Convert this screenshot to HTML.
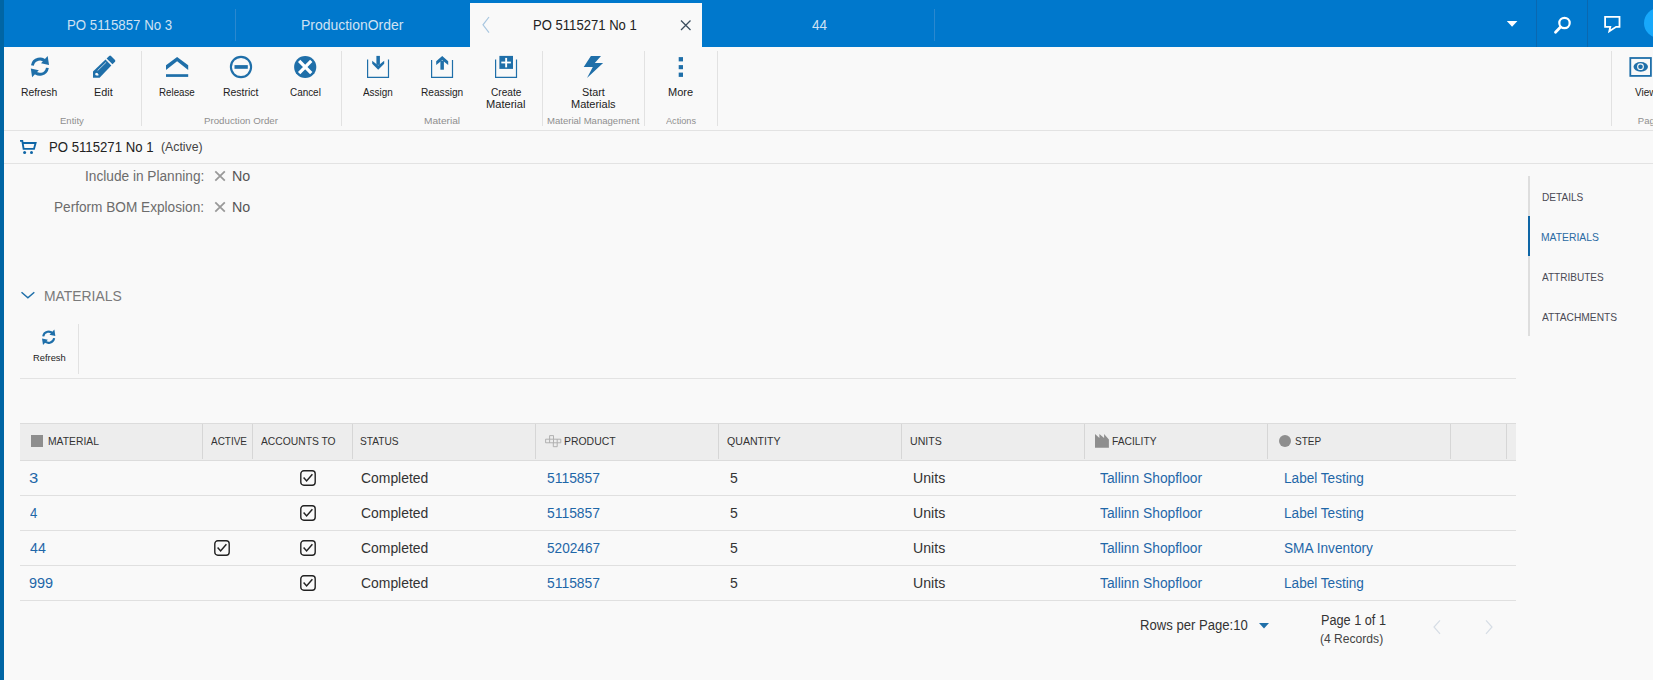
<!DOCTYPE html>
<html><head><meta charset="utf-8"><title>Production Order</title>
<style>
html,body{margin:0;padding:0;}
body{width:1653px;height:680px;overflow:hidden;background:#f9f9f9;position:relative;font-family:"Liberation Sans", sans-serif;}
.t{position:absolute;white-space:nowrap;}
.r{position:absolute;}
.s{position:absolute;overflow:visible;}
</style></head><body>
<div class="r" style="left:0px;top:0px;width:1653px;height:47px;background:#0078cc;"></div>
<div class="r" style="left:0px;top:0px;width:4px;height:680px;background:#0065a4;"></div>
<div class="t" style="left:67.25px;top:15px;font-size:14px;line-height:20px;color:#cfe2f3;transform:scaleX(0.9473);transform-origin:0 0;">PO 5115857 No 3</div>
<div class="r" style="left:235px;top:9px;width:1px;height:32px;background:#2a88cf;"></div>
<div class="t" style="left:301.20px;top:15px;font-size:14px;line-height:20px;color:#cfe2f3;transform:scaleX(0.9961);transform-origin:0 0;">ProductionOrder</div>
<div class="r" style="left:470px;top:3px;width:232px;height:44px;background:#f9f9f9;"></div>
<svg class="s" style="left:480px;top:15px;" width="12" height="20" viewBox="0 0 12 20"><path d="M9,2 L3,9.8 L9,17.6" fill="none" stroke="#a9c7e0" stroke-width="1.2"/></svg>
<div class="t" style="left:533.47px;top:15px;font-size:14px;line-height:20px;color:#222;transform:scaleX(0.9345);transform-origin:0 0;">PO 5115271 No 1</div>
<svg class="s" style="left:678px;top:18px;" width="15" height="15" viewBox="0 0 15 15"><path d="M3,2.5 L12.5,12 M12.5,2.5 L3,12" fill="none" stroke="#3d4f60" stroke-width="1.3"/></svg>
<div class="t" style="left:811.80px;top:15px;font-size:14px;line-height:20px;color:#cfe2f3;transform:scaleX(0.9667);transform-origin:0 0;">44</div>
<div class="r" style="left:934px;top:9px;width:1px;height:32px;background:#2a88cf;"></div>
<svg class="s" style="left:1505px;top:19px;" width="14" height="10" viewBox="0 0 14 10"><path d="M1.8,2 H12.4 L7.1,7.7 Z" fill="#ffffff"/></svg>
<div class="r" style="left:1536px;top:0px;width:1px;height:47px;background:#0a68b0;"></div>
<div class="r" style="left:1587px;top:0px;width:1px;height:47px;background:#0a68b0;"></div>
<svg class="s" style="left:1550px;top:14px;" width="26" height="22" viewBox="0 0 26 22"><circle cx="14.5" cy="9" r="5.2" fill="none" stroke="#fff" stroke-width="2.2"/><path d="M10.6,13 L5.5,18.2" stroke="#fff" stroke-width="2.8" stroke-linecap="round"/></svg>
<svg class="s" style="left:1600px;top:13px;" width="24" height="22" viewBox="0 0 24 22"><path d="M5.1,3.9 H19.5 V13.8 H16.1 L9.3,18.3 L10.3,13.8 H5.1 Z" fill="none" stroke="#fff" stroke-width="1.8" stroke-linejoin="miter"/></svg>
<div class="r" style="left:1644px;top:8px;width:30px;height:30px;border-radius:50%;background:#17a8fb"></div>
<div class="r" style="left:4px;top:130px;width:1649px;height:1px;background:#e3e3e3;"></div>
<div class="r" style="left:141px;top:51px;width:1px;height:75px;background:#e2e2e2;"></div>
<div class="r" style="left:341px;top:51px;width:1px;height:75px;background:#e2e2e2;"></div>
<div class="r" style="left:542px;top:51px;width:1px;height:75px;background:#e2e2e2;"></div>
<div class="r" style="left:644px;top:51px;width:1px;height:75px;background:#e2e2e2;"></div>
<div class="r" style="left:717px;top:51px;width:1px;height:75px;background:#e2e2e2;"></div>
<div class="r" style="left:1611px;top:51px;width:1px;height:75px;background:#e2e2e2;"></div>
<svg class="s" style="left:28px;top:54px;" width="26" height="27" viewBox="0 0 26 27"><g transform="scale(1.0)"><path d="M4.39,11.47 A7.6,7.6 0 0 1 18.12,8.3" fill="none" stroke="#1f6fa9" stroke-width="2.86"/><path d="M19.69,2.1 L21.02,10.9 L13,9.17 Z" fill="#1f6fa9"/><path d="M19.41,13.85 A7.6,7.6 0 0 1 5.68,17.02" fill="none" stroke="#1f6fa9" stroke-width="2.86"/><path d="M4.11,23.22 L2.78,14.42 L10.8,16.15 Z" fill="#1f6fa9"/></g></svg>
<div class="t" style="left:21.36px;top:83px;font-size:10px;line-height:20px;color:#222;transform:scaleX(1.0353);transform-origin:0 0;">Refresh</div>
<svg class="s" style="left:90px;top:53px;" width="28" height="28" viewBox="0 0 28 28"><path d="M3,18.5 L15.5,6.6 L21.3,12.6 L9.6,24.7 L3,24.7 Z" fill="#1f6fa9"/><path d="M16.6,5.4 L19.2,2.9 Q20.1,2.1 21,2.9 L25,6.9 Q25.8,7.8 25,8.7 L22.5,11.3 Z" fill="#1f6fa9"/><path d="M7.6,17.6 L16.2,9.2" stroke="#f9f9f9" stroke-width="0.9" opacity="0.8"/><circle cx="6.7" cy="21.2" r="1.3" fill="#f9f9f9"/><path d="M5.8,20.2 L8.4,22.2" stroke="#f9f9f9" stroke-width="1.4"/></svg>
<div class="t" style="left:94.22px;top:83px;font-size:10px;line-height:20px;color:#222;transform:scaleX(1.0812);transform-origin:0 0;">Edit</div>
<div class="t" style="left:59.70px;top:111px;font-size:9.5px;line-height:20px;color:#8f8f8f;transform:scaleX(1.0043);transform-origin:0 0;">Entity</div>
<svg class="s" style="left:163px;top:53px;" width="28" height="28" viewBox="0 0 28 28"><path d="M3,12.3 L14.1,3.9 L25.2,12.3 L25.2,16.9 L14.1,8.2 L3,16.9 Z" fill="#1f6fa9"/><rect x="3" y="21.2" width="22.2" height="2.7" fill="#1f6fa9"/></svg>
<div class="t" style="left:158.53px;top:83px;font-size:10px;line-height:20px;color:#222;transform:scaleX(0.9750);transform-origin:0 0;">Release</div>
<svg class="s" style="left:228px;top:54px;" width="26" height="26" viewBox="0 0 26 26"><circle cx="13" cy="13" r="10.1" fill="none" stroke="#1f6fa9" stroke-width="2.1"/><rect x="6.5" y="11.1" width="13.3" height="3.7" fill="#1f6fa9"/></svg>
<div class="t" style="left:222.75px;top:83px;font-size:10px;line-height:20px;color:#222;transform:scaleX(1.0455);transform-origin:0 0;">Restrict</div>
<svg class="s" style="left:292px;top:54px;" width="26" height="26" viewBox="0 0 26 26"><circle cx="13.2" cy="13" r="11.1" fill="#1f6fa9"/><path d="M7.15,6.95 L19.25,19.05 M19.25,6.95 L7.15,19.05" stroke="#fff" stroke-width="3.3"/></svg>
<div class="t" style="left:289.70px;top:83px;font-size:10px;line-height:20px;color:#222;transform:scaleX(0.9903);transform-origin:0 0;">Cancel</div>
<div class="t" style="left:203.78px;top:111px;font-size:9.5px;line-height:20px;color:#8f8f8f;transform:scaleX(1.0225);transform-origin:0 0;">Production Order</div>
<svg class="s" style="left:364px;top:53px;" width="28" height="28" viewBox="0 0 28 28"><path d="M3.6,6.4 V24.3 H24.5 V6.4" fill="none" stroke="#1f6fa9" stroke-width="1.2"/><rect x="12.4" y="2.9" width="3.5" height="9" fill="#1f6fa9"/><path d="M8.2,7.8 L14.2,12.6 L20.2,7.8 L20.2,10.8 L14.2,16.7 L8.2,10.8 Z" fill="#1f6fa9"/></svg>
<div class="t" style="left:363.20px;top:83px;font-size:10px;line-height:20px;color:#222;transform:scaleX(0.9900);transform-origin:0 0;">Assign</div>
<svg class="s" style="left:428px;top:53px;" width="28" height="28" viewBox="0 0 28 28"><path d="M3.6,7 V24.3 H24.5 V7" fill="none" stroke="#1f6fa9" stroke-width="1.2"/><rect x="12.4" y="8" width="3.5" height="8.7" fill="#1f6fa9"/><path d="M8.2,8.2 L14.2,2.9 L20.2,8.2 L20.2,11.9 L14.2,7.2 L8.2,11.9 Z" fill="#1f6fa9"/></svg>
<div class="t" style="left:420.79px;top:83px;font-size:10px;line-height:20px;color:#222;transform:scaleX(1.0125);transform-origin:0 0;">Reassign</div>
<svg class="s" style="left:492px;top:53px;" width="28" height="28" viewBox="0 0 28 28"><path d="M3.6,6.4 V24.3 H24.5 V6.4" fill="none" stroke="#1f6fa9" stroke-width="1.2"/><rect x="7.4" y="2.9" width="13.6" height="13" fill="#1f6fa9"/><rect x="9.3" y="8.6" width="9.6" height="1.8" fill="#fff"/><rect x="13.2" y="4.9" width="1.9" height="9.5" fill="#fff"/></svg>
<div class="t" style="left:491.00px;top:83px;font-size:10px;line-height:20px;color:#222;transform:scaleX(1.0100);transform-origin:0 0;">Create</div>
<div class="t" style="left:486.49px;top:95px;font-size:10px;line-height:20px;color:#222;transform:scaleX(1.1088);transform-origin:0 0;">Material</div>
<div class="t" style="left:423.93px;top:111px;font-size:9.5px;line-height:20px;color:#8f8f8f;transform:scaleX(1.0687);transform-origin:0 0;">Material</div>
<svg class="s" style="left:580px;top:53px;" width="28" height="28" viewBox="0 0 28 28"><path d="M10.9,2.9 L21,2.9 L14.8,10.1 L23.1,10.1 L7,24.9 L12.8,14 L3.7,14 Z" fill="#1f6fa9"/></svg>
<div class="t" style="left:581.52px;top:83px;font-size:10px;line-height:20px;color:#222;transform:scaleX(1.0800);transform-origin:0 0;">Start</div>
<div class="t" style="left:571.00px;top:95px;font-size:10px;line-height:20px;color:#222;transform:scaleX(1.1000);transform-origin:0 0;">Materials</div>
<div class="t" style="left:546.59px;top:111px;font-size:9.5px;line-height:20px;color:#8f8f8f;transform:scaleX(1.0055);transform-origin:0 0;">Material Management</div>
<svg class="s" style="left:676px;top:55px;" width="10" height="24" viewBox="0 0 10 24"><rect x="2.7" y="2.1" width="4.3" height="4.3" fill="#1f6fa9"/><rect x="2.7" y="10.1" width="4.3" height="4.1" fill="#1f6fa9"/><rect x="2.7" y="17.6" width="4.3" height="4.3" fill="#1f6fa9"/></svg>
<div class="t" style="left:667.60px;top:83px;font-size:10px;line-height:20px;color:#222;transform:scaleX(1.1000);transform-origin:0 0;">More</div>
<div class="t" style="left:665.70px;top:111px;font-size:9.5px;line-height:20px;color:#8f8f8f;transform:scaleX(0.9645);transform-origin:0 0;">Actions</div>
<svg class="s" style="left:1625px;top:50px;" width="28" height="30" viewBox="0 0 28 30"><rect x="5.3" y="8" width="20.6" height="17.9" fill="none" stroke="#1f6fa9" stroke-width="1.8"/><ellipse cx="15.75" cy="16.85" rx="7.25" ry="4.85" fill="#1f6fa9"/><circle cx="15.5" cy="16.7" r="3.4" fill="#f9f9f9"/><circle cx="15.5" cy="16.7" r="2.3" fill="#1f6fa9"/></svg>
<div class="t" style="left:1635.10px;top:83px;font-size:10px;line-height:20px;color:#222;">View</div>
<div class="t" style="left:1637.80px;top:111px;font-size:9.5px;line-height:20px;color:#8f8f8f;">Page</div>
<div class="r" style="left:4px;top:163px;width:1649px;height:1px;background:#e3e3e3;"></div>
<svg class="s" style="left:16px;top:136px;" width="24" height="22" viewBox="0 0 24 22"><path d="M4,4.9 H6.3 L7.6,12.9 H18 L19.6,7 H6.6" fill="none" stroke="#0f66a6" stroke-width="1.9" stroke-linejoin="miter"/><circle cx="8.6" cy="16.5" r="1.5" fill="#0f66a6"/><circle cx="15.5" cy="16.5" r="1.5" fill="#0f66a6"/></svg>
<div class="t" style="left:49.36px;top:137px;font-size:14px;line-height:20px;color:#222;transform:scaleX(0.9409);transform-origin:0 0;">PO 5115271 No 1</div>
<div class="t" style="left:160.76px;top:137px;font-size:13px;line-height:20px;color:#444;transform:scaleX(0.9429);transform-origin:0 0;">(Active)</div>
<div class="t" style="left:85.22px;top:166px;font-size:14px;line-height:20px;color:#6c6c6c;transform:scaleX(0.9767);transform-origin:0 0;">Include in Planning:</div>
<div class="t" style="left:54.43px;top:197px;font-size:14px;line-height:20px;color:#6c6c6c;transform:scaleX(0.9737);transform-origin:0 0;">Perform BOM Explosion:</div>
<svg class="s" style="left:213px;top:169.2px;" width="14" height="14" viewBox="0 0 14 14"><path d="M2.3,2.3 L11.8,11.6 M11.8,2.3 L2.3,11.6" stroke="#999" stroke-width="1.8"/></svg>
<svg class="s" style="left:213px;top:200.0px;" width="14" height="14" viewBox="0 0 14 14"><path d="M2.3,2.3 L11.8,11.6 M11.8,2.3 L2.3,11.6" stroke="#999" stroke-width="1.8"/></svg>
<div class="t" style="left:231.88px;top:166px;font-size:14px;line-height:20px;color:#555;transform:scaleX(1.0187);transform-origin:0 0;">No</div>
<div class="t" style="left:231.88px;top:197px;font-size:14px;line-height:20px;color:#555;transform:scaleX(1.0187);transform-origin:0 0;">No</div>
<svg class="s" style="left:19px;top:288px;" width="18" height="12" viewBox="0 0 18 12"><path d="M2.5,4.2 L8.9,9.8 L15.3,4.2" fill="none" stroke="#1f6fa9" stroke-width="1.5"/></svg>
<div class="t" style="left:43.87px;top:286px;font-size:15px;line-height:20px;color:#7a7a7a;transform:scaleX(0.9265);transform-origin:0 0;">MATERIALS</div>
<svg class="s" style="left:40.07px;top:327.57px;" width="19" height="20" viewBox="0 0 19 20"><g transform="scale(0.73)"><path d="M4.39,11.47 A7.6,7.6 0 0 1 18.12,8.3" fill="none" stroke="#1f6fa9" stroke-width="2.86"/><path d="M19.69,2.1 L21.02,10.9 L13,9.17 Z" fill="#1f6fa9"/><path d="M19.41,13.85 A7.6,7.6 0 0 1 5.68,17.02" fill="none" stroke="#1f6fa9" stroke-width="2.86"/><path d="M4.11,23.22 L2.78,14.42 L10.8,16.15 Z" fill="#1f6fa9"/></g></svg>
<div class="t" style="left:32.52px;top:348px;font-size:9.5px;line-height:20px;color:#222;transform:scaleX(0.9844);transform-origin:0 0;">Refresh</div>
<div class="r" style="left:78px;top:324px;width:1px;height:50px;background:#e2e2e2;"></div>
<div class="r" style="left:20px;top:378px;width:1496px;height:1px;background:#e3e3e3;"></div>
<div class="r" style="left:20px;top:423px;width:1496px;height:1px;background:#dcdcdc;"></div>
<div class="r" style="left:20px;top:424px;width:1496px;height:36px;background:#ededed;"></div>
<div class="r" style="left:20px;top:460px;width:1496px;height:1px;background:#dcdcdc;"></div>
<div class="r" style="left:202px;top:424px;width:1px;height:35px;background:#d6d6d6;"></div>
<div class="r" style="left:252px;top:424px;width:1px;height:35px;background:#d6d6d6;"></div>
<div class="r" style="left:352px;top:424px;width:1px;height:35px;background:#d6d6d6;"></div>
<div class="r" style="left:535px;top:424px;width:1px;height:35px;background:#d6d6d6;"></div>
<div class="r" style="left:718px;top:424px;width:1px;height:35px;background:#d6d6d6;"></div>
<div class="r" style="left:901px;top:424px;width:1px;height:35px;background:#d6d6d6;"></div>
<div class="r" style="left:1084px;top:424px;width:1px;height:35px;background:#d6d6d6;"></div>
<div class="r" style="left:1267px;top:424px;width:1px;height:35px;background:#d6d6d6;"></div>
<div class="r" style="left:1450px;top:424px;width:1px;height:35px;background:#d6d6d6;"></div>
<div class="r" style="left:1506px;top:424px;width:1px;height:35px;background:#d6d6d6;"></div>
<div class="r" style="left:31px;top:435px;width:12px;height:12px;background:#8e8e8e;"></div>
<div class="t" style="left:47.86px;top:431px;font-size:11px;line-height:20px;color:#333;transform:scaleX(0.9396);transform-origin:0 0;">MATERIAL</div>
<div class="t" style="left:211.00px;top:431px;font-size:11px;line-height:20px;color:#333;transform:scaleX(0.9051);transform-origin:0 0;">ACTIVE</div>
<div class="t" style="left:261.10px;top:431px;font-size:11px;line-height:20px;color:#333;transform:scaleX(0.9367);transform-origin:0 0;">ACCOUNTS TO</div>
<div class="t" style="left:360.12px;top:431px;font-size:11px;line-height:20px;color:#333;transform:scaleX(0.9256);transform-origin:0 0;">STATUS</div>
<svg class="s" style="left:544px;top:434px;" width="18" height="14" viewBox="0 0 18 14"><path d="M5.6,1.6 H9.5 V5.2 H16.8 V8.8 H13.2 V12.7 H9.3 V8.8 H1.6 V5.2 H5.6 Z M5.6,5.2 V8.8 M9.5,5.2 V8.8 M13.2,5.2 V8.8 M9.3,8.8 H13.2 M5.6,5.2 H9.5" fill="none" stroke="#aaa" stroke-width="0.9"/></svg>
<div class="t" style="left:563.75px;top:431px;font-size:11px;line-height:20px;color:#333;transform:scaleX(0.9491);transform-origin:0 0;">PRODUCT</div>
<div class="t" style="left:727.30px;top:431px;font-size:11px;line-height:20px;color:#333;transform:scaleX(0.9636);transform-origin:0 0;">QUANTITY</div>
<div class="t" style="left:909.64px;top:431px;font-size:11px;line-height:20px;color:#333;transform:scaleX(0.9625);transform-origin:0 0;">UNITS</div>
<svg class="s" style="left:1094px;top:433px;" width="16" height="16" viewBox="0 0 16 16"><path d="M1,1.1 L5.4,5.1 V1.1 L10.1,5.1 V1.1 L14.9,6.5 V14.7 H1 Z" fill="#8e8e8e"/></svg>
<div class="t" style="left:1112.27px;top:431px;font-size:11px;line-height:20px;color:#333;transform:scaleX(0.9348);transform-origin:0 0;">FACILITY</div>
<div class="r" style="left:1279px;top:435.2px;width:12px;height:12px;border-radius:50%;background:#8e8e8e"></div>
<div class="t" style="left:1295.49px;top:431px;font-size:11px;line-height:20px;color:#333;transform:scaleX(0.9111);transform-origin:0 0;">STEP</div>
<div class="r" style="left:20px;top:495px;width:1496px;height:1px;background:#e0e0e0;"></div>
<div class="t" style="left:28.92px;top:468px;font-size:14px;line-height:20px;color:#1f67a8;transform:scaleX(1.1833);transform-origin:0 0;">3</div>
<svg class="s" style="left:300px;top:470px;" width="17" height="17" viewBox="0 0 17 17"><rect x="0.8" y="0.8" width="14.4" height="14.4" rx="3" fill="none" stroke="#222" stroke-width="1.4"/><path d="M3.6,7.6 L6.6,10.9 L12.4,4.2" fill="none" stroke="#222" stroke-width="1.5"/></svg>
<div class="t" style="left:361.31px;top:468px;font-size:14px;line-height:20px;color:#333;transform:scaleX(0.9939);transform-origin:0 0;">Completed</div>
<div class="t" style="left:547.21px;top:468px;font-size:14px;line-height:20px;color:#1f67a8;transform:scaleX(0.9923);transform-origin:0 0;">5115857</div>
<div class="t" style="left:729.90px;top:468px;font-size:14px;line-height:20px;color:#333;">5</div>
<div class="t" style="left:912.99px;top:468px;font-size:14px;line-height:20px;color:#333;transform:scaleX(1.0097);transform-origin:0 0;">Units</div>
<div class="t" style="left:1100.10px;top:468px;font-size:14px;line-height:20px;color:#1f67a8;transform:scaleX(0.9864);transform-origin:0 0;">Tallinn Shopfloor</div>
<div class="t" style="left:1284.13px;top:468px;font-size:14px;line-height:20px;color:#1f67a8;transform:scaleX(0.9716);transform-origin:0 0;">Label Testing</div>
<div class="r" style="left:20px;top:530px;width:1496px;height:1px;background:#e0e0e0;"></div>
<div class="t" style="left:29.80px;top:503px;font-size:14px;line-height:20px;color:#1f67a8;transform:scaleX(0.9375);transform-origin:0 0;">4</div>
<svg class="s" style="left:300px;top:505px;" width="17" height="17" viewBox="0 0 17 17"><rect x="0.8" y="0.8" width="14.4" height="14.4" rx="3" fill="none" stroke="#222" stroke-width="1.4"/><path d="M3.6,7.6 L6.6,10.9 L12.4,4.2" fill="none" stroke="#222" stroke-width="1.5"/></svg>
<div class="t" style="left:361.31px;top:503px;font-size:14px;line-height:20px;color:#333;transform:scaleX(0.9939);transform-origin:0 0;">Completed</div>
<div class="t" style="left:547.21px;top:503px;font-size:14px;line-height:20px;color:#1f67a8;transform:scaleX(0.9923);transform-origin:0 0;">5115857</div>
<div class="t" style="left:729.90px;top:503px;font-size:14px;line-height:20px;color:#333;">5</div>
<div class="t" style="left:912.99px;top:503px;font-size:14px;line-height:20px;color:#333;transform:scaleX(1.0097);transform-origin:0 0;">Units</div>
<div class="t" style="left:1100.10px;top:503px;font-size:14px;line-height:20px;color:#1f67a8;transform:scaleX(0.9864);transform-origin:0 0;">Tallinn Shopfloor</div>
<div class="t" style="left:1284.13px;top:503px;font-size:14px;line-height:20px;color:#1f67a8;transform:scaleX(0.9716);transform-origin:0 0;">Label Testing</div>
<div class="r" style="left:20px;top:565px;width:1496px;height:1px;background:#e0e0e0;"></div>
<div class="t" style="left:29.80px;top:538px;font-size:14px;line-height:20px;color:#1f67a8;transform:scaleX(1.0133);transform-origin:0 0;">44</div>
<svg class="s" style="left:214px;top:540px;" width="17" height="17" viewBox="0 0 17 17"><rect x="0.8" y="0.8" width="14.4" height="14.4" rx="3" fill="none" stroke="#222" stroke-width="1.4"/><path d="M3.6,7.6 L6.6,10.9 L12.4,4.2" fill="none" stroke="#222" stroke-width="1.5"/></svg>
<svg class="s" style="left:300px;top:540px;" width="17" height="17" viewBox="0 0 17 17"><rect x="0.8" y="0.8" width="14.4" height="14.4" rx="3" fill="none" stroke="#222" stroke-width="1.4"/><path d="M3.6,7.6 L6.6,10.9 L12.4,4.2" fill="none" stroke="#222" stroke-width="1.5"/></svg>
<div class="t" style="left:361.31px;top:538px;font-size:14px;line-height:20px;color:#333;transform:scaleX(0.9939);transform-origin:0 0;">Completed</div>
<div class="t" style="left:547.23px;top:538px;font-size:14px;line-height:20px;color:#1f67a8;transform:scaleX(0.9736);transform-origin:0 0;">5202467</div>
<div class="t" style="left:729.90px;top:538px;font-size:14px;line-height:20px;color:#333;">5</div>
<div class="t" style="left:912.99px;top:538px;font-size:14px;line-height:20px;color:#333;transform:scaleX(1.0097);transform-origin:0 0;">Units</div>
<div class="t" style="left:1100.10px;top:538px;font-size:14px;line-height:20px;color:#1f67a8;transform:scaleX(0.9864);transform-origin:0 0;">Tallinn Shopfloor</div>
<div class="t" style="left:1284.12px;top:538px;font-size:14px;line-height:20px;color:#1f67a8;transform:scaleX(0.9767);transform-origin:0 0;">SMA Inventory</div>
<div class="r" style="left:20px;top:600px;width:1496px;height:1px;background:#e0e0e0;"></div>
<div class="t" style="left:28.77px;top:573px;font-size:14px;line-height:20px;color:#1f67a8;transform:scaleX(1.0318);transform-origin:0 0;">999</div>
<svg class="s" style="left:300px;top:575px;" width="17" height="17" viewBox="0 0 17 17"><rect x="0.8" y="0.8" width="14.4" height="14.4" rx="3" fill="none" stroke="#222" stroke-width="1.4"/><path d="M3.6,7.6 L6.6,10.9 L12.4,4.2" fill="none" stroke="#222" stroke-width="1.5"/></svg>
<div class="t" style="left:361.31px;top:573px;font-size:14px;line-height:20px;color:#333;transform:scaleX(0.9939);transform-origin:0 0;">Completed</div>
<div class="t" style="left:547.21px;top:573px;font-size:14px;line-height:20px;color:#1f67a8;transform:scaleX(0.9923);transform-origin:0 0;">5115857</div>
<div class="t" style="left:729.90px;top:573px;font-size:14px;line-height:20px;color:#333;">5</div>
<div class="t" style="left:912.99px;top:573px;font-size:14px;line-height:20px;color:#333;transform:scaleX(1.0097);transform-origin:0 0;">Units</div>
<div class="t" style="left:1100.10px;top:573px;font-size:14px;line-height:20px;color:#1f67a8;transform:scaleX(0.9864);transform-origin:0 0;">Tallinn Shopfloor</div>
<div class="t" style="left:1284.13px;top:573px;font-size:14px;line-height:20px;color:#1f67a8;transform:scaleX(0.9716);transform-origin:0 0;">Label Testing</div>
<div class="t" style="left:1140.06px;top:615px;font-size:14px;line-height:20px;color:#333;transform:scaleX(0.9360);transform-origin:0 0;">Rows per Page:10</div>
<svg class="s" style="left:1257px;top:621px;" width="14" height="9" viewBox="0 0 14 9"><path d="M2,2 H12 L7,7.4 Z" fill="#1f6fa9"/></svg>
<div class="t" style="left:1320.89px;top:610px;font-size:14px;line-height:20px;color:#333;transform:scaleX(0.9071);transform-origin:0 0;">Page 1 of 1</div>
<div class="t" style="left:1320.27px;top:629px;font-size:13px;line-height:20px;color:#444;transform:scaleX(0.9303);transform-origin:0 0;">(4 Records)</div>
<svg class="s" style="left:1430px;top:618px;" width="14" height="18" viewBox="0 0 14 18"><path d="M10,2.3 L4,9 L10,15.8" fill="none" stroke="#d6dde5" stroke-width="1.2"/></svg>
<svg class="s" style="left:1482px;top:618px;" width="14" height="18" viewBox="0 0 14 18"><path d="M4,2.3 L10,9 L4,15.8" fill="none" stroke="#d6dde5" stroke-width="1.2"/></svg>
<div class="r" style="left:1528px;top:176px;width:2px;height:160px;background:#dedede;"></div>
<div class="r" style="left:1528px;top:216px;width:2px;height:40px;background:#0f66a6;"></div>
<div class="t" style="left:1541.88px;top:187px;font-size:11px;line-height:20px;color:#4a4a55;transform:scaleX(0.9182);transform-origin:0 0;">DETAILS</div>
<div class="t" style="left:1541.46px;top:227px;font-size:11px;line-height:20px;color:#2a6aa3;transform:scaleX(0.9400);transform-origin:0 0;">MATERIALS</div>
<div class="t" style="left:1542.40px;top:267px;font-size:11px;line-height:20px;color:#4a4a55;transform:scaleX(0.9119);transform-origin:0 0;">ATTRIBUTES</div>
<div class="t" style="left:1542.40px;top:307px;font-size:11px;line-height:20px;color:#4a4a55;transform:scaleX(0.9284);transform-origin:0 0;">ATTACHMENTS</div>
</body></html>
